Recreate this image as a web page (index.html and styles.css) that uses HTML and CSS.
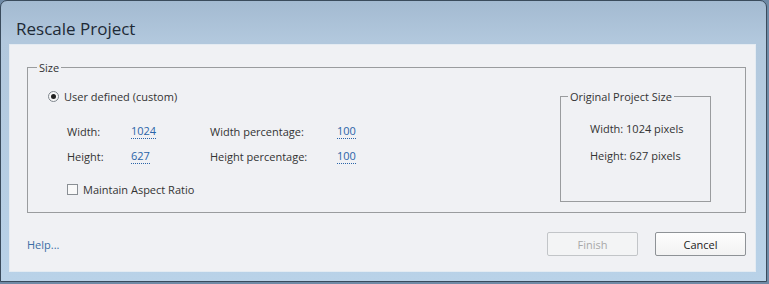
FILE: index.html
```html
<!DOCTYPE html>
<html lang="en">
<head>
  <meta charset="UTF-8">
  <title>Rescale Project</title>
  <link rel="stylesheet" href="styles.css">
</head>
<body>
  <div class="window">
    <div class="titlebar">Rescale Project</div>

    <div class="content">
      <fieldset class="group size-group">
        <legend>Size</legend>

        <div class="size-body">
          <div class="size-left">
            <label class="radio-row">
              <span class="radio"><span class="dot"></span></span>
              User defined (custom)
            </label>

            <div class="fields">
              <span class="label">Width:</span>
              <span class="value">1024</span>
              <span class="label">Width percentage:</span>
              <span class="value">100</span>

              <span class="label">Height:</span>
              <span class="value">627</span>
              <span class="label">Height percentage:</span>
              <span class="value">100</span>
            </div>

            <label class="check-row">
              <span class="checkbox"></span>
              Maintain Aspect Ratio
            </label>
          </div>

          <fieldset class="group original-group">
            <legend>Original Project Size</legend>
            <div class="original-body">
              <p>Width: 1024 pixels</p>
              <p>Height: 627 pixels</p>
            </div>
          </fieldset>
        </div>
      </fieldset>

      <div class="footer">
        <a class="help" href="#">Help...</a>
        <div class="buttons">
          <button class="btn" disabled>Finish</button>
          <button class="btn">Cancel</button>
        </div>
      </div>
    </div>
  </div>
</body>
</html>
```

FILE: styles.css
```css
body {
  margin: 0;
  font-family: "Open Sans", "Noto Sans", sans-serif;
  font-size: 11px;
  color: #333;
  background: #6f8aa6;
}

.window {
  width: 767px;
  height: 282px;
  border: 1px solid #3a4b5c;
  border-radius: 7px 7px 0 0;
  background: linear-gradient(to bottom, #a3bad1 0, #b2c8dd 40px, #b9d2e8 100%);
  padding: 0 10px 9px 8px;
  box-sizing: border-box;
  display: flex;
  flex-direction: column;
}

.titlebar {
  height: 43px;
  flex: none;
  padding: 16px 0 0 7px;
  box-sizing: border-box;
  font-size: 17px;
  line-height: 24px;
  color: #1e2a36;
}

.content {
  flex: 1;
  background: #f0f1f4;
  border: 1px solid #e4ebf2;
  padding: 15px 9px 0 17px;
  display: flex;
  flex-direction: column;
}

.group {
  border: 1px solid #9a9c9e;
  margin: 0;
  padding: 0;
  min-width: 0;
}

.group legend {
  padding: 0 2px;
  margin-left: 9px;
  color: #333;
}

.size-group {
  height: 153px;
  box-sizing: border-box;
}

.size-body {
  display: flex;
  justify-content: space-between;
  padding: 14px 34px 0 20px;
}

.radio-row,
.check-row {
  display: flex;
  align-items: center;
  gap: 5px;
}

.radio {
  width: 11px;
  height: 11px;
  border: 1px solid #7f868d;
  border-radius: 50%;
  background: #f7f7f7;
  display: flex;
  align-items: center;
  justify-content: center;
  box-sizing: border-box;
}

.radio .dot {
  width: 5px;
  height: 5px;
  border-radius: 50%;
  background: #222;
}

.fields {
  display: grid;
  grid-template-columns: 64px 79px 127px auto;
  row-gap: 10px;
  margin: 20px 0 0 19px;
}

.value {
  color: #2a64a8;
  border-bottom: 1px dotted #2a64a8;
  justify-self: start;
  line-height: 14px;
}

.check-row {
  margin: 18px 0 0 19px;
}

.checkbox {
  width: 11px;
  height: 11px;
  border: 1px solid #8a8f94;
  background: #f9f9f9;
  box-sizing: border-box;
}

.original-group {
  width: 151px;
  height: 113px;
  box-sizing: border-box;
}

.original-group legend {
  margin-left: 7px;
}

.original-body {
  padding: 17px 0 0 29px;
}

.original-body p {
  margin: 0 0 12px;
}

.footer {
  display: flex;
  justify-content: space-between;
  align-items: center;
  margin-top: 19px;
}

.help {
  color: #3b6ea5;
  text-decoration: none;
}

.buttons {
  display: flex;
  gap: 17px;
}

.btn {
  width: 91px;
  height: 24px;
  font-family: inherit;
  font-size: 11px;
  color: #222;
  background: linear-gradient(to bottom, #fdfdfd, #f2f2f2);
  border: 1px solid #8e9296;
  border-radius: 2px;
}

.btn:disabled {
  color: #a8a8a8;
  border-color: #c2c5c8;
  background: #f3f4f5;
}
```
